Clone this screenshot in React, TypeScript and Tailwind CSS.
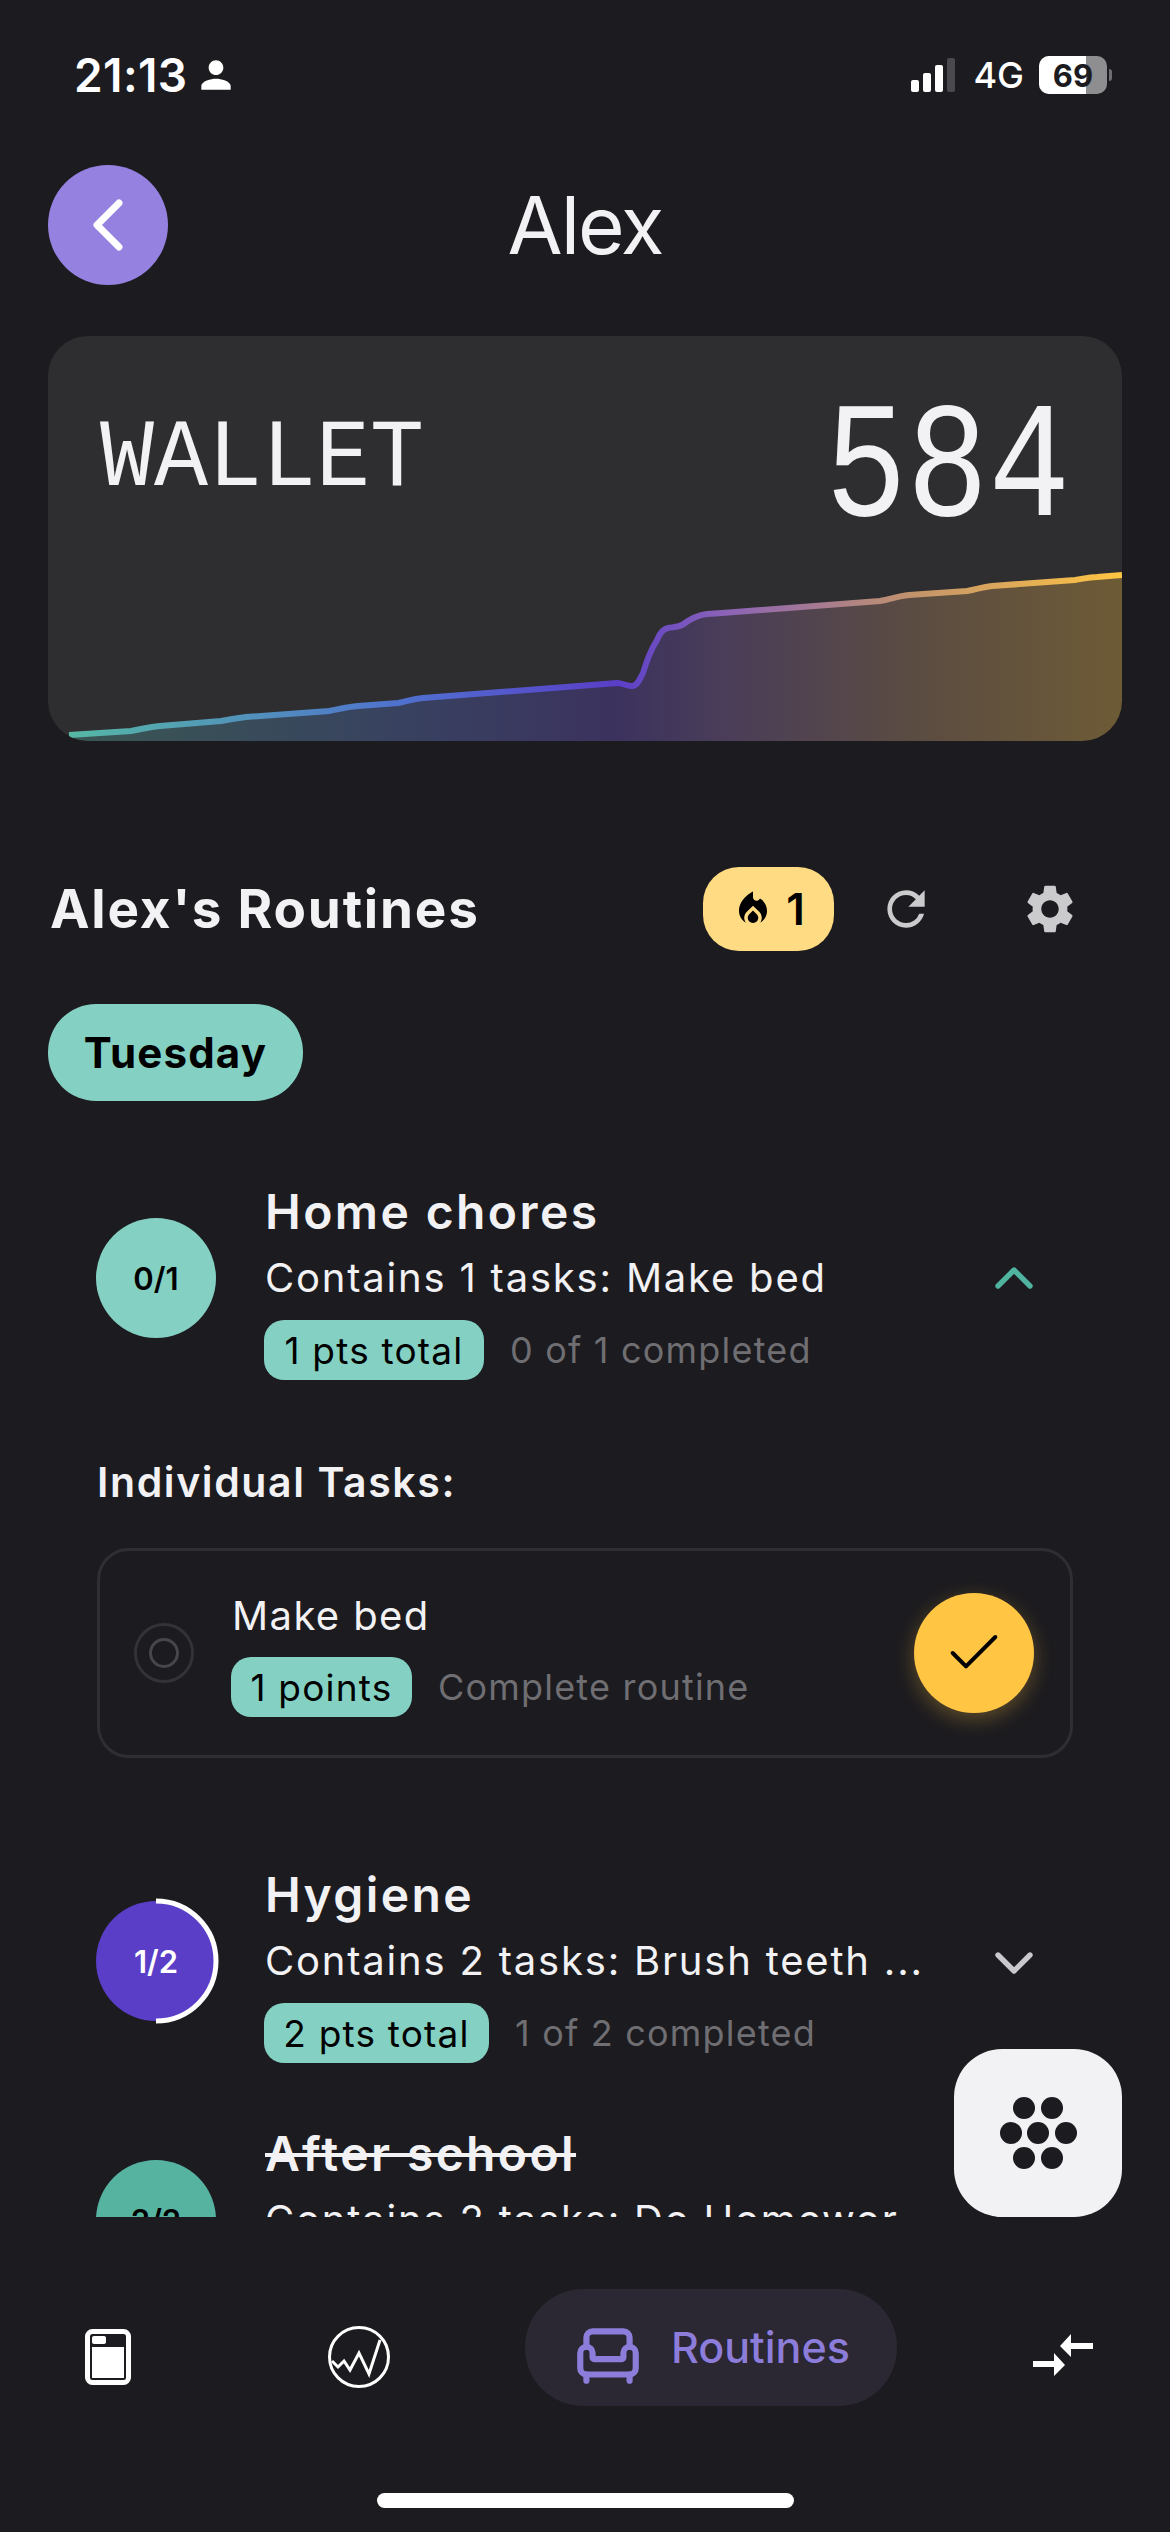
import { Armchair, Check, ChevronDown, ChevronLeft, ChevronUp } from "lucide-react"
import { MdLocalFireDepartment, MdPerson, MdRefresh, MdSettings } from "react-icons/md"

const chartLine =
    "M21 399 L83 395 C95 393 100 391 112 390 L173 385 C185 383 188 382 198 381 L281 375 C292 373 298 371 310 370 L350 367 C360 365 365 363 375 362 L569 347 C575 347 578 350 584 350 C590 350 592 342 595 337 C600 320 604 312 609 304 C612 296 615 293 620 292 C626 291 630 291 634 289 C642 283 650 279 659 278 L674 277 L832 265 C843 263 850 260 861 259 L919 255 C930 253 934 251 944 250 L1027 244 C1035 243 1040 241 1049 241 L1074 239"

function WalletChart() {
    return (
        <svg className="absolute inset-0" width="1074" height="405" viewBox="0 0 1074 405" fill="none">
            <defs>
                <linearGradient id="walletLine" x1="21" y1="0" x2="1074" y2="0" gradientUnits="userSpaceOnUse">
                    <stop offset="0" stopColor="#55b8a4" />
                    <stop offset="0.32" stopColor="#4f70cf" />
                    <stop offset="0.52" stopColor="#5a3ec8" />
                    <stop offset="0.62" stopColor="#8a62b8" />
                    <stop offset="0.8" stopColor="#c2936c" />
                    <stop offset="1" stopColor="#ffc543" />
                </linearGradient>
            </defs>
            <path d={`${chartLine} L1074 405 L21 405 Z`} fill="url(#walletLine)" fillOpacity="0.3" />
            <path d={chartLine} stroke="url(#walletLine)" strokeWidth="6" strokeLinecap="butt" />
        </svg>
    )
}

function StatusBar() {
    return (
        <div className="flex h-[165px] items-start justify-between pt-[50px] pl-[74px] pr-[58px] text-white">
            <div className="flex items-center gap-[8px]">
                <span className="text-[46px] leading-[50px] font-semibold tracking-[0.4px]">21:13</span>
                <MdPerson size={44} className="-ml-[2px]" />
            </div>
            <div className="flex items-center pt-[5px]">
                <div className="flex items-end gap-[4px] h-[34px]">
                    <div className="h-[12px] w-[8px] rounded-[2px] bg-white" />
                    <div className="h-[19px] w-[8px] rounded-[2px] bg-white" />
                    <div className="h-[27px] w-[8px] rounded-[2px] bg-white" />
                    <div className="h-[34px] w-[8px] rounded-[2px] bg-[#4a494d]" />
                </div>
                <span className="ml-[18px] text-[36px] leading-[40px] font-medium">4G</span>
                <div className="relative ml-[15px] flex h-[38px] w-[68px] items-center justify-center overflow-hidden rounded-[10px] bg-[#8e8d90]">
                    <div className="absolute inset-y-0 left-0 w-[47px] bg-white" />
                    <span className="relative text-[31px] leading-none font-bold text-[#1c1b1f]">69</span>
                </div>
                <div className="ml-[2px] h-[12px] w-[3px] rounded-r-full bg-[#6f6e72]" />
            </div>
        </div>
    )
}

function Header() {
    return (
        <div className="grid h-[120px] grid-cols-[120px_1fr_120px] items-center px-[48px]">
            <div className="flex h-[120px] w-[120px] items-center justify-center rounded-full bg-[#9581e0] text-white">
                <ChevronLeft size={88} strokeWidth={1.9} />
            </div>
            <h1 className="text-center text-[80px] leading-none font-normal tracking-[-2px] text-[#f2f1f4]">Alex</h1>
        </div>
    )
}

function WalletCard() {
    return (
        <div className="relative mx-[48px] mt-[51px] h-[405px] overflow-hidden rounded-[40px] bg-[#2e2d30]">
            <WalletChart />
            <div className="relative flex items-start justify-between pl-[52px] pr-[52px] text-[#f2f1f4] font-['Liberation_Mono',monospace]">
                <span className="mt-[85px] origin-top scale-y-[1.08] text-[90px] leading-[70px]">WALLET</span>
                <span className="mt-[74px] origin-top scale-y-[1.22] text-[136px] leading-[100px]">584</span>
            </div>
        </div>
    )
}

function SectionHead() {
    return (
        <div className="mt-[126px] flex h-[84px] items-center px-[50px]">
            <h2 className="flex-1 text-[53px] leading-none font-bold tracking-[1.8px] text-[#f2f1f4]">Alex's Routines</h2>
            <div className="flex h-[84px] w-[131px] items-center justify-center gap-[12px] rounded-[36px] bg-[#ffdc84] text-black">
                <MdLocalFireDepartment size={42} />
                <span className="text-[44px] leading-none font-semibold">1</span>
            </div>
            <MdRefresh size={56} className="ml-[44px] text-[#cbcacd]" />
            <MdSettings size={58} className="ml-[87px] mr-[41px] text-[#cbcacd]" />
        </div>
    )
}

function Badge({ label, note, width }: { label: string; note: string; width: string }) {
    return (
        <div className="flex items-center gap-[26px]">
            <div className={`flex h-[60px] items-center justify-center rounded-[20px] bg-[#84d1c3] text-[37px] leading-none tracking-[1.2px] text-black ${width}`}>
                {label}
            </div>
            <span className="text-[36px] leading-none tracking-[1.2px] text-[#6f6e72]">{note}</span>
        </div>
    )
}

type RoutineProps = {
    count: string
    title: string
    summary: string
    points?: string
    pointsWidth?: string
    note?: string
    circle: string
    countColor: string
    arc?: boolean
    done?: boolean
    open?: boolean
    className?: string
}

function Routine({ count, title, summary, points, pointsWidth, note, circle, countColor, arc, done, open, className }: RoutineProps) {
    return (
        <div className={`flex items-start pl-[96px] ${className ?? ""}`}>
            <div className={`relative mt-[28px] flex h-[120px] w-[120px] shrink-0 items-center justify-center rounded-full ${circle}`}>
                <span className={`text-[31px] leading-none font-semibold ${countColor}`}>{count}</span>
                {arc && (
                    <svg className="absolute -top-[3px] -left-[3px]" width="126" height="126" viewBox="0 0 126 126" fill="none">
                        <path d="M63 3 A60 60 0 0 1 63 123" stroke="white" strokeWidth="5" />
                    </svg>
                )}
            </div>
            <div className="ml-[49px] w-[660px] shrink-0">
                <div className={`text-[48px] leading-[44px] font-semibold tracking-[2.4px] text-[#f2f1f4] ${done ? "line-through" : ""}`}>{title}</div>
                <div className="mt-[22px] h-[44px] text-[40px] leading-[44px] tracking-[1.8px] whitespace-nowrap text-[#f2f1f4]">{summary}</div>
                {points && (
                    <div className="mt-[20px] -ml-[1px]">
                        <Badge label={points} note={note ?? ""} width={pointsWidth ?? ""} />
                    </div>
                )}
            </div>
            {open ? (
                <ChevronUp size={64} strokeWidth={2} className="mt-[56px] ml-[57px] shrink-0 text-[#4fb3a0]" />
            ) : (
                <ChevronDown size={64} strokeWidth={2} className="mt-[58px] ml-[57px] shrink-0 text-[#c9c8cc]" />
            )}
        </div>
    )
}

function TaskCard() {
    return (
        <div className="mx-[97px] mt-[44px] flex h-[210px] items-center rounded-[32px] border-[3px] border-[#2f2e32] pl-[34px] pr-[36px]">
            <div className="flex h-[60px] w-[60px] shrink-0 items-center justify-center rounded-full border-[3px] border-[#333236]">
                <div className="h-[30px] w-[30px] rounded-full border-[3px] border-[#47464a]" />
            </div>
            <div className="ml-[38px] flex-1 pt-[5px]">
                <div className="text-[40px] leading-[44px] tracking-[1.4px] text-[#f2f1f4]">Make bed</div>
                <div className="mt-[19px] -ml-[1px]">
                    <Badge label="1 points" note="Complete routine" width="w-[181px]" />
                </div>
            </div>
            <div className="flex h-[120px] w-[120px] shrink-0 items-center justify-center rounded-full bg-[#ffc543] text-black shadow-[0_6px_20px_rgba(255,197,67,0.3)]">
                <Check size={64} strokeWidth={1.5} />
            </div>
        </div>
    )
}

function Fab() {
    const dots = [
        [1024, 2107],
        [1052, 2107],
        [1011, 2132],
        [1038, 2132],
        [1066, 2132],
        [1024, 2157],
        [1052, 2157],
    ]
    return (
        <div className="absolute right-[48px] bottom-[315px] flex h-[168px] w-[168px] items-center justify-center rounded-[48px] bg-[#f2f1f4]">
            <svg width="80" height="76" viewBox="998 2094 80 76" fill="#1c1b1f">
                {dots.map(([cx, cy]) => (
                    <circle key={`${cx}-${cy}`} cx={cx} cy={cy} r="11" />
                ))}
            </svg>
        </div>
    )
}

function BottomNav() {
    return (
        <div className="h-[315px] shrink-0">
            <div className="flex h-[117px] mt-[72px] items-center pl-[85px]">
                <svg width="46" height="56" viewBox="0 0 46 56" className="mt-[18px] shrink-0" fill="none">
                    <rect x="2.5" y="2.5" width="41" height="51" rx="5" stroke="white" strokeWidth="5" />
                    <rect x="7" y="7" width="14" height="8" rx="2" fill="white" />
                    <rect x="7" y="18" width="32" height="31" fill="white" />
                </svg>
                <svg width="62" height="62" viewBox="0 0 62 62" className="ml-[197px] mt-[18px] shrink-0" fill="none" stroke="white">
                    <circle cx="31" cy="31" r="29.5" strokeWidth="3" />
                    <path d="M4 35 L10 41 L16 35 L22 44 L31 27 L41 48 L52 14" strokeWidth="3" strokeLinejoin="miter" />
                </svg>
                <div className="ml-[135px] flex h-[117px] w-[372px] shrink-0 items-center rounded-[58px] bg-[#2b2733] pl-[46px] text-[#8c7ddb]">
                    <Armchair size={74} strokeWidth={2} className="mt-[16px] shrink-0" />
                    <span className="ml-[26px] text-[43px] leading-none font-medium">Routines</span>
                </div>
                <svg width="60" height="42" viewBox="0 0 60 42" className="ml-[136px] mt-[14px] shrink-0" fill="white">
                    <path d="M60 9 H38 V0 L27 12 L38 23 V15 H60 Z" />
                    <path d="M0 27 H21 V19 L32 31 L21 42 V33 H0 Z" />
                </svg>
            </div>
            <div className="mx-auto mt-[87px] h-[15px] w-[417px] rounded-full bg-white" />
        </div>
    )
}

export default function App() {
    return (
        <div className="relative flex h-[2532px] w-[1170px] flex-col overflow-hidden bg-[#1c1b1f] font-['Inter',sans-serif]">
            <div className="min-h-0 flex-1 overflow-hidden">
                <StatusBar />
                <Header />
                <WalletCard />
                <SectionHead />
                <div className="ml-[48px] mt-[53px] flex h-[97px] w-[255px] items-center justify-center rounded-[48px] bg-[#84d1c3] text-[42px] leading-none font-bold tracking-[1.2px] text-black">
                    Tuesday
                </div>
                <Routine
                    className="mt-[89px]"
                    count="0/1"
                    title="Home chores"
                    summary="Contains 1 tasks: Make bed"
                    points="1 pts total"
                    pointsWidth="w-[220px]"
                    note="0 of 1 completed"
                    circle="bg-[#84d1c3]"
                    countColor="text-black"
                    open
                />
                <div className="ml-[97px] mt-[80px] text-[41px] leading-[44px] font-semibold tracking-[1.6px] text-[#f2f1f4]">Individual Tasks:</div>
                <TaskCard />
                <Routine
                    className="mt-[115px]"
                    count="1/2"
                    title="Hygiene"
                    summary="Contains 2 tasks: Brush teeth ..."
                    points="2 pts total"
                    pointsWidth="w-[225px]"
                    note="1 of 2 completed"
                    circle="bg-[#5a3ec8]"
                    countColor="text-white"
                    arc
                />
                <Routine
                    className="mt-[69px]"
                    count="2/2"
                    title="After school"
                    summary="Contains 2 tasks: Do Homewor..."
                    circle="bg-[#55b3a0]"
                    countColor="text-black"
                    done
                />
            </div>
            <Fab />
            <BottomNav />
        </div>
    )
}
